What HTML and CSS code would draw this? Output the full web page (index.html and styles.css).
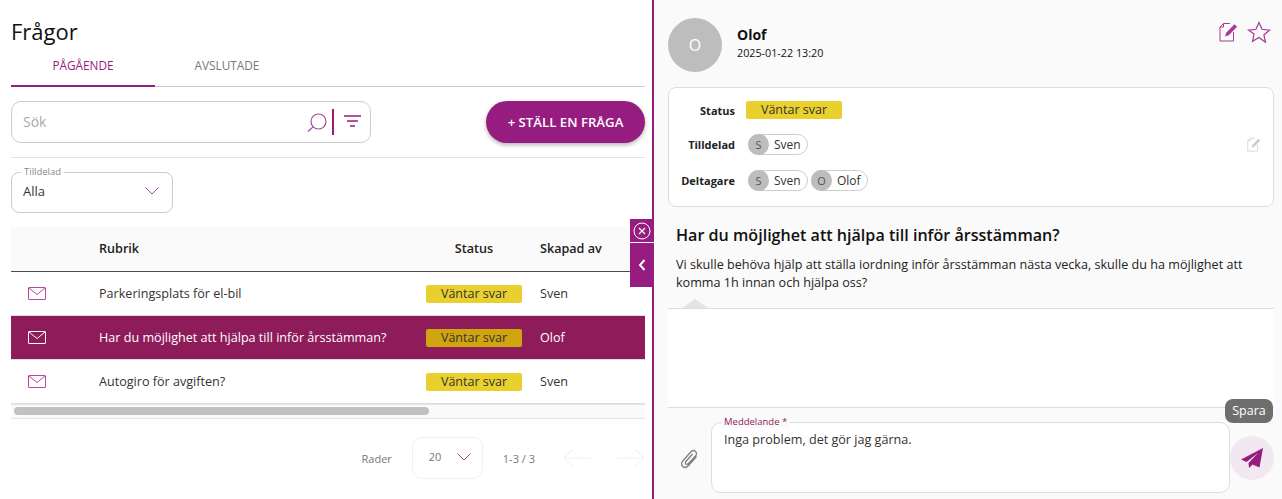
FILE: index.html
```html
<!DOCTYPE html>
<html lang="sv">
<head>
    <meta charset="UTF-8">
    <title>Frågor</title>
    <link rel="stylesheet" href="styles.css">
</head>
<body>
    <svg class="icon-defs" width="0" height="0">
        <symbol id="mail" viewBox="0 0 18 14">
            <rect x="0.5" y="0.5" width="17" height="12" rx="0.5" fill="none" stroke="currentColor"/>
            <path d="M1 1l8 6.5L17 1" fill="none" stroke="currentColor"/>
        </symbol>
        <symbol id="edit" viewBox="0 0 19 20">
            <path d="M11 1.500H4.500L1 5v14h13.500V10" fill="none" stroke="currentColor"/>
            <path d="M4.500 1.500V5H1" fill="none" stroke="currentColor"/>
            <path d="M6 14.500l1.200-3.800L15.500 2.300l2.600 2.400-8.300 8.500z" fill="currentColor"/>
        </symbol>
    </svg>

    <main class="left-panel">
        <h1 class="page-title">Frågor</h1>
        <nav class="tabs">
            <a class="tab tab-active">PÅGÅENDE</a>
            <a class="tab">AVSLUTADE</a>
        </nav>

        <div class="toolbar">
            <div class="search-box">
                <span class="search-text">Sök</span>
                <svg class="search-icon" width="20" height="20" viewBox="0 0 20 20">
                    <circle cx="11.500" cy="8.500" r="7.500" fill="none" stroke="#a64a9c" stroke-width="1.200"/>
                    <path d="M6 14l-5 4.500" fill="none" stroke="#a64a9c" stroke-width="1.200"/>
                </svg>
                <span class="search-divider"></span>
                <svg class="filter-icon" width="17" height="13" viewBox="0 0 17 13">
                    <path d="M0 1h17M3 6h11M6 11h5" fill="none" stroke="#971c7f" stroke-width="1.600"/>
                </svg>
            </div>
            <button class="ask-button">+ STÄLL EN FRÅGA</button>
        </div>

        <div class="filters">
            <div class="select-box">
                <span class="select-label">Tilldelad</span>
                <span>Alla</span>
                <svg width="14" height="8" viewBox="0 0 14 8"><path d="M0.500 0.500L7 7l6.500-6.500" fill="none" stroke="#a64a9c"/></svg>
            </div>
        </div>

        <div class="table">
            <div class="row table-head">
                <span></span><span>Rubrik</span><span class="status-head">Status</span><span>Skapad av</span>
            </div>
            <div class="row">
                <svg class="mail-icon"><use href="#mail"/></svg>
                <span>Parkeringsplats för el-bil</span>
                <span class="badge">Väntar svar</span>
                <span>Sven</span>
            </div>
            <div class="row row-selected">
                <svg class="mail-icon"><use href="#mail"/></svg>
                <span>Har du möjlighet att hjälpa till inför årsstämman?</span>
                <span class="badge">Väntar svar</span>
                <span>Olof</span>
            </div>
            <div class="row">
                <svg class="mail-icon"><use href="#mail"/></svg>
                <span>Autogiro för avgiften?</span>
                <span class="badge">Väntar svar</span>
                <span>Sven</span>
            </div>
            <div class="scrollbar"><div class="scrollbar-thumb"></div></div>
        </div>

        <div class="pager">
            <span>Rader</span>
            <div class="page-size">
                <span>20</span>
                <svg width="14" height="8" viewBox="0 0 14 8"><path d="M0.500 0.500L7 7l6.500-6.500" fill="none" stroke="#a64a9c"/></svg>
            </div>
            <span class="page-range">1-3 / 3</span>
            <svg class="page-arrow" width="28" height="20" viewBox="0 0 28 20"><path d="M28 10H1M10 1l-9 9 9 9" fill="none" stroke="#eeeeee"/></svg>
            <svg class="page-arrow" width="28" height="20" viewBox="0 0 28 20"><path d="M0 10h27M18 1l9 9-9 9" fill="none" stroke="#eeeeee"/></svg>
        </div>

        <div class="side-tabs">
            <div class="side-close">
                <svg width="18" height="18" viewBox="0 0 18 18">
                    <circle cx="9" cy="9" r="8" fill="none" stroke="#fff"/>
                    <path d="M6 6l6 6M12 6l-6 6" fill="none" stroke="#fff" stroke-width="1.200"/>
                </svg>
            </div>
            <div class="side-collapse">
                <svg width="8" height="12" viewBox="0 0 8 12"><path d="M6.500 1L2 6l4.500 5" fill="none" stroke="#fff" stroke-width="2"/></svg>
            </div>
        </div>
    </main>

    <aside class="right-panel">
        <header class="author">
            <div class="avatar">O</div>
            <div class="author-text">
                <div class="author-name">Olof</div>
                <div class="author-date">2025-01-22 13:20</div>
            </div>
            <div class="author-actions">
                <svg class="edit-icon" width="19" height="20"><use href="#edit"/></svg>
                <svg width="24" height="22" viewBox="0 0 24 22">
                    <path d="M12 1.500l3 6.800 7.500.8-5.600 4.900 1.600 7.300L12 16.500l-6.500 3.800 1.600-7.300L1.500 9.100 9 8.300z" fill="none" stroke="#a8389a" stroke-width="1.200"/>
                </svg>
            </div>
        </header>

        <section class="info-card">
            <div class="info-row">
                <span class="info-label">Status</span>
                <span class="badge">Väntar svar</span>
            </div>
            <div class="info-row">
                <span class="info-label">Tilldelad</span>
                <span class="chip"><span class="chip-avatar">S</span>Sven</span>
                <svg class="info-edit" width="14" height="15"><use href="#edit"/></svg>
            </div>
            <div class="info-row">
                <span class="info-label">Deltagare</span>
                <span class="chip"><span class="chip-avatar">S</span>Sven</span>
                <span class="chip chip-olof"><span class="chip-avatar">O</span>Olof</span>
            </div>
        </section>

        <section class="question">
            <h2>Har du möjlighet att hjälpa till inför årsstämman?</h2>
            <p>Vi skulle behöva hjälp att ställa iordning inför årsstämman nästa vecka, skulle du ha möjlighet att komma 1h innan och hjälpa oss?</p>
        </section>

        <div class="thread"></div>

        <footer class="composer">
            <svg class="clip-icon" width="18" height="20" viewBox="0 0 18 20">
                <path d="M16.500 7.500L8.500 16.500c-1.800 2-4.200 2.400-5.800 1-1.600-1.400-1.500-3.800.3-5.800l7.500-8.500c1.500-1.700 3.600-2 5-.8 1.400 1.200 1.300 3.200-.2 4.900L8.500 14.500c-.8.900-1.900 1-2.600.4-.7-.6-.6-1.700.2-2.600L12.500 5" fill="none" stroke="#808080" stroke-width="1.300"/>
            </svg>
            <div class="message-box">
                <span class="message-label">Meddelande *</span>
                Inga problem, det gör jag gärna.
            </div>
            <button class="send-button">
                <svg width="22" height="20" viewBox="0 0 22 20">
                    <path d="M22 0L0 11.500l5.500 2.500L17 5 7.500 15l0.500 5 3.500-3.500 7 3z" fill="#971c7f"/>
                </svg>
            </button>
            <span class="save-tooltip">Spara</span>
        </footer>
    </aside>
</body>
</html>
```

FILE: styles.css
```css
* {
    box-sizing: border-box;
}

html, body {
    height: 100%;
}

body {
    margin: 0;
    display: flex;
    height: 499px;
    overflow: hidden;
    font-family: "Open Sans", Arial, sans-serif;
    font-size: 12.600px;
    color: #333;
    background-color: #fff;
}

.icon-defs {
    position: absolute;
}

/* left side */
.left-panel {
    position: relative;
    width: 654px;
    flex-shrink: 0;
    padding: 0 7px 0 11px;
    border-right: 2px solid #971c7f;
}

.page-title {
    margin: 0;
    padding-top: 15px;
    height: 52px;
    font-size: 22px;
    line-height: 32px;
    font-weight: 400;
    color: #111;
}

.tabs {
    display: flex;
    height: 35px;
    border-bottom: 1px solid #ccc;
}

.tab {
    width: 144px;
    height: 35px;
    padding-top: 4px;
    text-align: center;
    font-size: 11.800px;
    line-height: 18px;
    color: #777;
}

.tab-active {
    color: #971c7f;
    border-bottom: 2px solid #971c7f;
}

.toolbar {
    display: flex;
    justify-content: space-between;
    align-items: center;
    height: 71px;
    padding-bottom: 1px;
    border-bottom: 1px solid #e2e2e2;
}

.search-box {
    display: flex;
    align-items: center;
    width: 360px;
    height: 42px;
    padding: 0 9px 0 11px;
    border: 1px solid #ccc;
    border-radius: 10px;
}

.search-text {
    flex: 1;
    font-size: 14px;
    color: #aaa;
}

.search-icon {
    margin-top: 2px;
}

.search-divider {
    width: 2px;
    height: 26px;
    margin: 0 10px 0 5px;
    background-color: #971c7f;
}

.ask-button {
    width: 159px;
    height: 42px;
    padding: 0;
    border: none;
    border-radius: 21px;
    background-color: #971c7f;
    box-shadow: 0 2px 4px rgba(0, 0, 0, 0.3);
    color: #fff;
    font-family: inherit;
    font-size: 13.200px;
    font-weight: 600;
}

.filters {
    height: 69px;
    padding-top: 14px;
}

.select-box {
    position: relative;
    display: flex;
    justify-content: space-between;
    align-items: center;
    width: 162px;
    height: 41px;
    padding: 0 13px 3px 11px;
    border: 1px solid #ccc;
    border-radius: 8px;
    font-size: 13px;
    color: #333;
}

.select-label {
    position: absolute;
    top: -7px;
    left: 9px;
    padding: 0 3px;
    background-color: #fff;
    font-size: 9.500px;
    line-height: 12px;
    color: #888;
}

.row {
    display: grid;
    grid-template-columns: 88px 327px 114px 1fr;
    align-items: center;
    height: 44px;
    border-bottom: 1px solid #ddd;
}

.table-head {
    height: 45px;
    padding-bottom: 2px;
    background-color: #fafafa;
    border-bottom: 1px solid #444e55;
    font-weight: 600;
    color: #222;
}

.status-head {
    width: 96px;
    text-align: center;
}

.mail-icon {
    width: 18px;
    height: 14px;
    margin-left: 17px;
    color: #b548a6;
}

.row-selected {
    background-color: #8e1c5a;
    color: #fff;
}

.row-selected .mail-icon {
    color: #fff;
}

.row-selected .badge {
    background-color: #d0a40f;
}

.badge {
    display: inline-block;
    width: 96px;
    height: 18px;
    border-radius: 2px;
    background-color: #e9d02f;
    text-align: center;
    font-size: 12.500px;
    line-height: 18px;
    color: #333;
}

.scrollbar {
    height: 15px;
    padding-top: 2px;
    background-color: #fafafa;
    border-top: 1px solid #e6e6e6;
    border-bottom: 1px solid #e6e6e6;
}

.scrollbar-thumb {
    width: 415px;
    height: 8px;
    margin-left: 3px;
    border-radius: 4px;
    background-color: #c1c1c1;
}

.pager {
    display: flex;
    align-items: center;
    justify-content: flex-end;
    height: 42px;
    margin-top: 18px;
    font-size: 11px;
    color: #777;
}

.page-size {
    display: flex;
    justify-content: space-between;
    align-items: center;
    width: 71px;
    height: 42px;
    margin: 0 20px;
    padding: 0 11px 3px 16px;
    border: 1px solid #f0f0f0;
    border-radius: 10px;
}

.page-range {
    margin-right: 28px;
}

.page-arrow + .page-arrow {
    margin-left: 26px;
}

.side-tabs {
    position: absolute;
    top: 219px;
    right: -2px;
    width: 24px;
}

.side-close {
    display: flex;
    justify-content: center;
    align-items: center;
    height: 24px;
    background-color: #971c7f;
    border-bottom: 1px solid #fff;
}

.side-collapse {
    display: flex;
    justify-content: center;
    align-items: center;
    height: 44px;
    background-color: #971c7f;
}

/* right side */
.right-panel {
    flex: 1;
    display: flex;
    flex-direction: column;
    padding: 0 8px 0 14px;
    background-color: #fafafa;
}

.author {
    display: flex;
    height: 87px;
    padding-top: 18px;
}

.avatar {
    display: flex;
    justify-content: center;
    align-items: center;
    width: 54px;
    height: 54px;
    border-radius: 50%;
    background-color: #bdbdbd;
    color: #fff;
    font-size: 16px;
}

.author-text {
    flex: 1;
    margin-left: 15px;
    color: #111;
}

.author-name {
    margin-top: 7px;
    font-size: 14px;
    line-height: 20px;
    font-weight: 700;
}

.author-date {
    font-size: 10.750px;
    line-height: 16px;
}

.author-actions {
    display: flex;
    gap: 9px;
    margin: 3px 3px 0 0;
    color: #a8389a;
}

.edit-icon {
    margin-top: 1px;
}

.info-card {
    height: 120px;
    padding-top: 13px;
    background-color: #fff;
    border: 1px solid #ddd;
    border-radius: 8px;
}

.info-row {
    display: flex;
    align-items: center;
    height: 36px;
}

.info-row:first-child {
    height: 18px;
    margin-bottom: 7px;
}

.info-row:first-child .badge {
    margin-left: -1px;
}

.info-label {
    width: 66px;
    margin-right: 12px;
    text-align: right;
    font-size: 11px;
    font-weight: 700;
    color: #222;
}

.chip {
    display: inline-flex;
    align-items: center;
    width: 60px;
    height: 21px;
    margin-left: 1px;
    border: 1px solid #ccc;
    border-radius: 11px;
    font-size: 12px;
    color: #333;
}

.chip-olof {
    width: 57px;
    margin-left: 3px;
}

.chip-avatar {
    display: flex;
    justify-content: center;
    align-items: center;
    width: 21px;
    height: 21px;
    margin: 0 5px 0 -1px;
    border-radius: 50%;
    background-color: #bdbdbd;
    font-size: 11px;
    color: #555;
}

.info-edit {
    margin-left: auto;
    margin-right: 12px;
    color: #ccc;
}

.question {
    height: 101px;
    padding: 17px 7px 0 8px;
    color: #222;
}

.question h2 {
    margin: 0 0 10px;
    font-size: 16.100px;
    line-height: 22px;
    font-weight: 600;
    color: #111;
}

.question p {
    margin: 0;
    width: 580px;
    font-size: 12.600px;
    line-height: 18px;
}

.thread {
    position: relative;
    height: 100px;
    background-color: #fff;
    border-top: 1px solid #ddd;
    border-bottom: 1px solid #ddd;
}

.thread::before {
    content: "";
    position: absolute;
    top: -10px;
    left: 14px;
    border-left: 13px solid transparent;
    border-right: 13px solid transparent;
    border-bottom: 9px solid #e4e4e4;
}

.composer {
    position: relative;
    display: flex;
    align-items: flex-start;
    flex: 1;
    padding-top: 14px;
}

.clip-icon {
    margin: 27px 0 0 12px;
}

.message-box {
    position: relative;
    width: 519px;
    height: 71px;
    margin-left: 13px;
    padding: 8px 12px;
    background-color: #fff;
    border: 1px solid #ddd;
    border-radius: 10px;
    font-size: 12.600px;
    line-height: 17px;
    color: #333;
}

.message-label {
    position: absolute;
    top: -8px;
    left: 9px;
    padding: 0 3px;
    background-color: #fafafa;
    font-size: 9.500px;
    line-height: 13px;
    color: #8e1c5a;
}

.send-button {
    display: flex;
    justify-content: center;
    align-items: center;
    width: 44px;
    height: 44px;
    margin: 14px 0 0 0;
    padding: 0;
    border: none;
    border-radius: 50%;
    background-color: #f2e8f1;
}

.save-tooltip {
    position: absolute;
    top: -9px;
    right: 1px;
    width: 48px;
    height: 24px;
    border-radius: 8px;
    background-color: #6e6e6e;
    text-align: center;
    font-size: 12.500px;
    line-height: 24px;
    color: #fff;
}
```
